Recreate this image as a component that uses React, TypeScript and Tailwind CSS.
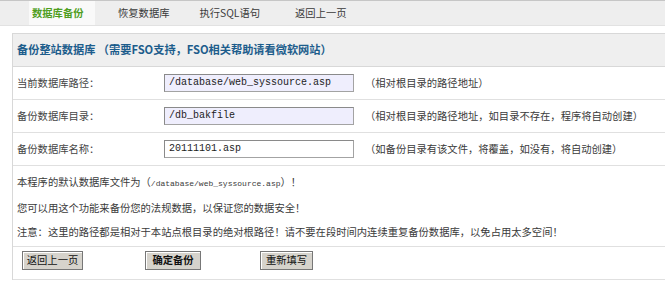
const rows = [
  {
    label: "当前数据库路径：",
    value: "/database/web_syssource.asp",
    hint: "（相对根目录的路径地址）",
    tinted: true,
  },
  {
    label: "备份数据库目录：",
    value: "/db_bakfile",
    hint: "（相对根目录的路径地址，如目录不存在，程序将自动创建）",
    tinted: true,
  },
  {
    label: "备份数据库名称：",
    value: "20111101.asp",
    hint: "（如备份目录有该文件，将覆盖，如没有，将自动创建）",
    tinted: false,
  },
];

export default function App() {
  return (
    <div className="w-[665px] h-[281px] overflow-hidden bg-white text-[10.3px] leading-none text-[#3a3a3a] font-['Noto_Sans_CJK_SC',sans-serif]">
      {/* Tabs */}
      <div className="h-[26px] flex items-stretch bg-[#eeeeee] border-t border-[#c6c6c6] border-b border-b-[#e2e2e2] whitespace-nowrap">
        <div className="ml-[29px] w-[66px] pl-[3px] flex items-center bg-[#f9f9f9] text-[#4f9e1f] font-bold">
          数据库备份
        </div>
        <div className="ml-[23px] flex items-center">恢复数据库</div>
        <div className="ml-[30px] flex items-center">执行SQL语句</div>
        <div className="ml-[35px] flex items-center">返回上一页</div>
      </div>

      {/* Panel */}
      <div className="mt-[7px] ml-[12px] border-l border-t border-[#d8d8d8]">
        <div className="h-[33px] pl-[4px] flex items-center bg-[#efefef] border-b border-[#d8d8d8] text-[11.2px] font-bold text-[#1d5d8c] whitespace-nowrap">
          备份整站数据库 （需要FSO支持，FSO相关帮助请看微软网站）
        </div>

        {rows.map((r) => (
          <div
            key={r.label}
            className="h-[33px] flex items-center border-b border-[#e0e0e0] whitespace-nowrap"
          >
            <div className="w-[151px] pl-[4px] text-[#444]">{r.label}</div>
            <div
              className={`w-[190px] h-[18px] pl-[4px] flex items-center border border-[#a3a3a3] border-t-[#8a8a8a] border-l-[#8a8a8a] text-[10px] text-[#222] font-['Liberation_Mono',monospace] ${
                r.tinted ? "bg-[#efeefd]" : "bg-white"
              }`}
            >
              {r.value}
            </div>
            <div className="ml-[11px]">{r.hint}</div>
          </div>
        ))}

        {/* Info */}
        <div className="h-[81px] pl-[4px] pt-[4px] border-b border-[#e0e0e0] leading-[24px] whitespace-nowrap">
          <div>
            本程序的默认数据库文件为（
            <span className="font-['Liberation_Mono',monospace] text-[8px]">/database/web_syssource.asp</span>
            ）！
          </div>
          <div>您可以用这个功能来备份您的法规数据，以保证您的数据安全！</div>
          <div>注意：这里的路径都是相对于本站点根目录的绝对根路径！请不要在段时间内连续重复备份数据库，以免占用太多空间！</div>
        </div>

        {/* Buttons */}
        <div className="h-[33px] pt-[4px] flex items-start border-b border-[#e0e0e0] whitespace-nowrap text-[#111]">
          <button className="ml-[9px] w-[61px] h-[19px] flex items-center justify-center bg-[#d6d3cc] border border-[#777] shadow-[inset_1px_1px_0_#fff]">
            返回上一页
          </button>
          <button className="ml-[62px] w-[56px] h-[19px] flex items-center justify-center bg-[#d6d3cc] border border-[#777] shadow-[inset_1px_1px_0_#fff] font-bold">
            确定备份
          </button>
          <button className="ml-[59px] w-[53px] h-[19px] flex items-center justify-center bg-[#d6d3cc] border border-[#777] shadow-[inset_1px_1px_0_#fff]">
            重新填写
          </button>
        </div>
      </div>
    </div>
  );
}
